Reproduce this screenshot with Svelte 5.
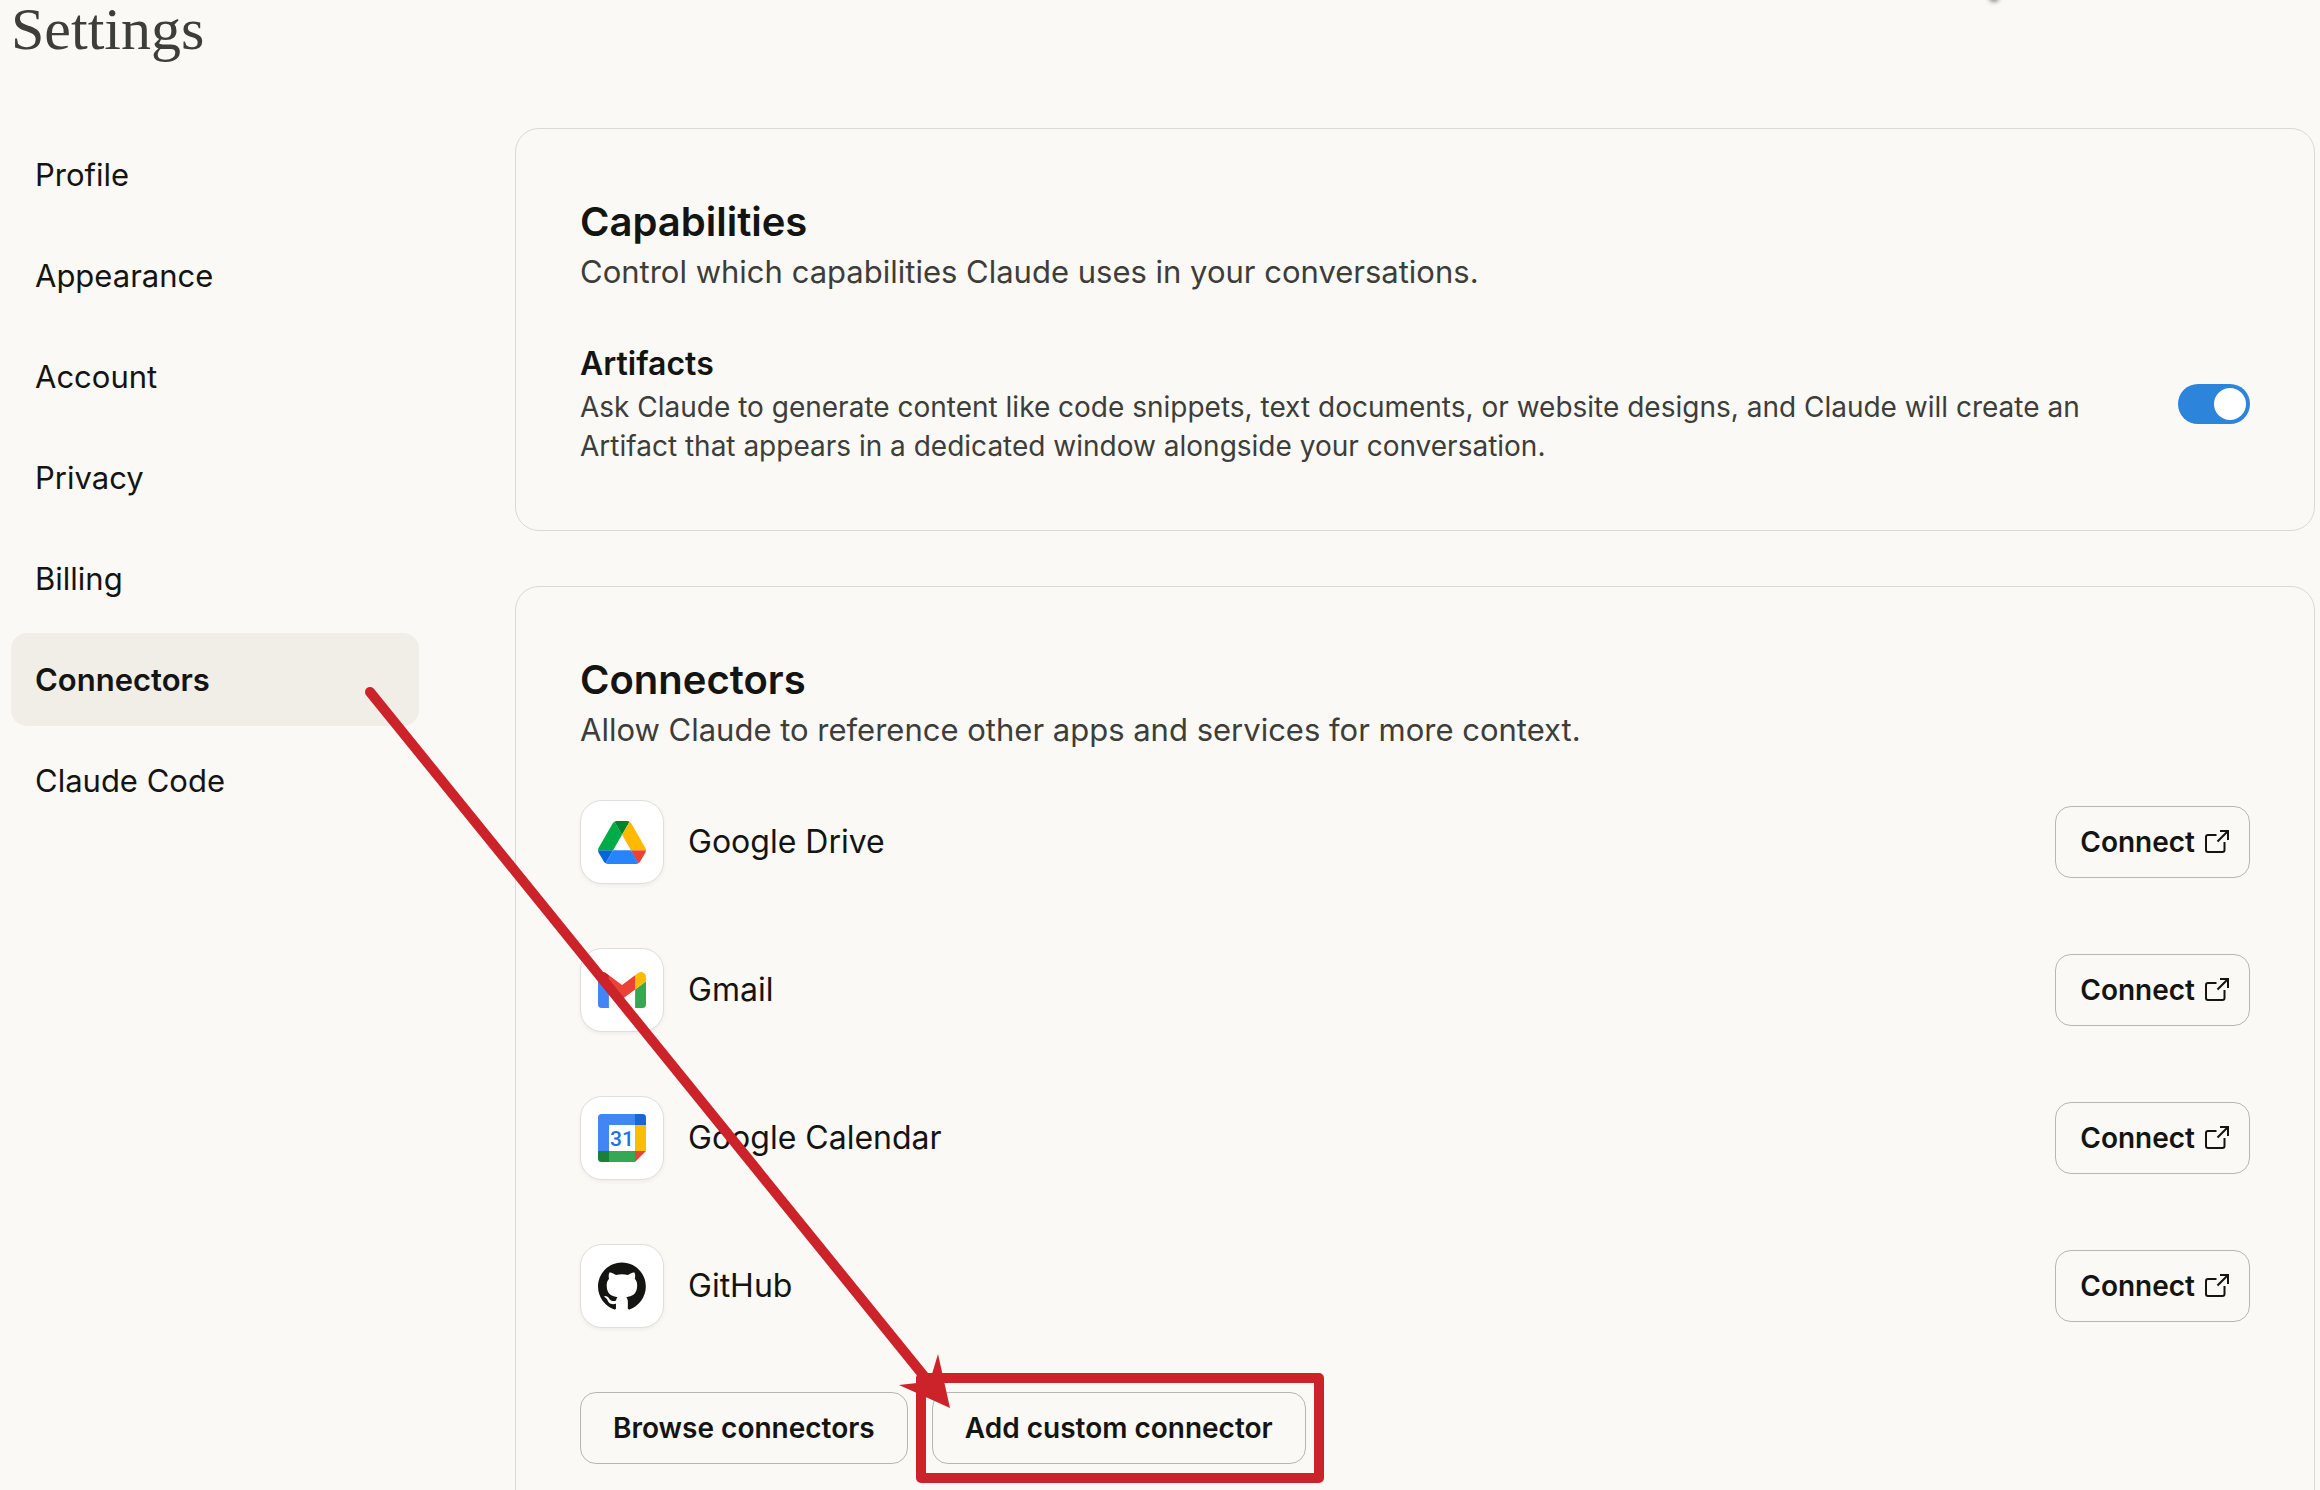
<script lang="ts">
	type ConnectorId = 'drive' | 'gmail' | 'calendar' | 'github';

	interface Connector {
		id: ConnectorId;
		name: string;
	}

	const sections = [
		'Profile',
		'Appearance',
		'Account',
		'Privacy',
		'Billing',
		'Connectors',
		'Claude Code'
	];

	const connectors: Connector[] = [
		{ id: 'drive', name: 'Google Drive' },
		{ id: 'gmail', name: 'Gmail' },
		{ id: 'calendar', name: 'Google Calendar' },
		{ id: 'github', name: 'GitHub' }
	];

	let active = $state('Connectors');
	let artifacts = $state(true);

	function select(e: MouseEvent, section: string) {
		e.preventDefault();
		active = section;
	}
</script>

{#snippet logo(id: ConnectorId)}
	{#if id === 'drive'}
		<svg width="48" height="43" viewBox="0 0 87.3 78" aria-hidden="true">
			<path
				fill="#0066da"
				d="m6.6 66.85 3.85 6.65c.8 1.4 1.95 2.5 3.3 3.3l13.75-23.8h-27.5c0 1.55.4 3.1 1.2 4.5z"
			/>
			<path
				fill="#00ac47"
				d="m43.65 25-13.75-23.8c-1.35.8-2.5 1.9-3.3 3.3l-25.4 44a9.06 9.06 0 0 0-1.2 4.5h27.5z"
			/>
			<path
				fill="#ea4335"
				d="m73.55 76.8c1.35-.8 2.5-1.9 3.3-3.3l1.6-2.75 7.65-13.25c.8-1.4 1.2-2.95 1.2-4.5h-27.5l5.85 11.5z"
			/>
			<path
				fill="#00832d"
				d="m43.65 25 13.75-23.8c-1.35-.8-2.9-1.2-4.5-1.2h-18.5c-1.6 0-3.15.45-4.5 1.2z"
			/>
			<path
				fill="#2684fc"
				d="m59.8 53h-32.3l-13.75 23.8c1.35.8 2.9 1.2 4.5 1.2h50.8c1.6 0 3.15-.45 4.5-1.2z"
			/>
			<path
				fill="#ffba00"
				d="m73.4 26.5-12.7-22c-.8-1.4-1.95-2.5-3.3-3.3l-13.75 23.8 16.15 28h27.45c0-1.55-.4-3.1-1.2-4.5z"
			/>
		</svg>
	{:else if id === 'gmail'}
		<svg width="48" height="36" viewBox="52 42 88 66" aria-hidden="true">
			<path fill="#4285f4" d="M58 108h14V74L52 59v43c0 3.32 2.69 6 6 6" />
			<path fill="#34a853" d="M120 108h14c3.32 0 6-2.69 6-6V59l-20 15" />
			<path fill="#fbbc04" d="M120 48v26l20-15v-8c0-7.42-8.47-11.65-14.4-7.2" />
			<path fill="#ea4335" d="M72 74V48l24 18 24-18v26L96 92" />
			<path fill="#c5221f" d="M52 51v8l20 15V48l-5.6-4.2c-5.94-4.45-14.4-.22-14.4 7.2" />
		</svg>
	{:else if id === 'calendar'}
		<svg width="48" height="48" viewBox="0 0 48 48" aria-hidden="true">
			<path fill="#4285f4" d="M3.500 0H37v11H11v26H0V3.500A3.500 3.500 0 0 1 3.500 0z" />
			<path fill="#1967d2" d="M37 0h7.500A3.500 3.500 0 0 1 48 3.500V11H37z" />
			<path fill="#fbbc04" d="M37 11h11v26H37z" />
			<path fill="#188038" d="M0 37h11v11H3.500A3.500 3.500 0 0 1 0 44.500z" />
			<path fill="#34a853" d="M11 37h26v11H11z" />
			<path fill="#ea4335" d="M37 37h11L37 48z" />
			<text class="day" x="24" y="32" text-anchor="middle">31</text>
		</svg>
	{:else}
		<svg width="48" height="48" viewBox="0 0 98 96" aria-hidden="true">
			<path
				fill="#141413"
				fill-rule="evenodd"
				d="M48.854 0C21.839 0 0 22 0 49.217c0 21.756 13.993 40.172 33.405 46.69 2.427.49 3.316-1.059 3.316-2.362 0-1.141-.08-5.052-.08-9.127-13.59 2.934-16.42-5.867-16.42-5.867-2.184-5.704-5.42-7.17-5.42-7.17-4.448-3.015.324-3.015.324-3.015 4.934.326 7.523 5.052 7.523 5.052 4.367 7.496 11.404 5.378 14.235 4.074.404-3.178 1.699-5.378 3.074-6.6-10.839-1.141-22.243-5.378-22.243-24.283 0-5.378 1.94-9.778 5.014-13.2-.485-1.222-2.184-6.275.486-13.038 0 0 4.125-1.304 13.426 5.052a46.97 46.97 0 0 1 12.214-1.63c4.125 0 8.33.571 12.213 1.63 9.302-6.356 13.427-5.052 13.427-5.052 2.67 6.763.97 11.816.485 13.038 3.155 3.422 5.015 7.822 5.015 13.2 0 18.905-11.404 23.06-22.324 24.283 1.78 1.548 3.316 4.481 3.316 9.126 0 6.6-.08 11.897-.08 13.526 0 1.304.89 2.853 3.316 2.364 19.412-6.52 33.405-24.935 33.405-46.691C97.707 22 75.788 0 48.854 0z"
			/>
		</svg>
	{/if}
{/snippet}

<div class="page">
	<span class="smudge"></span>
	<h1 class="title">Settings</h1>

	<div class="layout">
		<nav class="nav">
			{#each sections as section (section)}
				<a
					class="nav-item"
					class:active={section === active}
					href="#settings"
					onclick={(e) => select(e, section)}>{section}</a
				>
			{/each}
		</nav>

		<main class="cards">
			<section class="card">
				<h2 class="card-title">Capabilities</h2>
				<p class="card-text">Control which capabilities Claude uses in your conversations.</p>

				<div class="setting">
					<div>
						<label class="setting-title" for="artifacts">Artifacts</label>
						<p class="setting-text">
							Ask Claude to generate content like code snippets, text documents, or website designs,
							and Claude will create an Artifact that appears in a dedicated window alongside your
							conversation.
						</p>
					</div>
					<input id="artifacts" class="toggle" type="checkbox" bind:checked={artifacts} />
				</div>
			</section>

			<section class="card">
				<h2 class="card-title">Connectors</h2>
				<p class="card-text">Allow Claude to reference other apps and services for more context.</p>

				<ul class="connectors">
					{#each connectors as connector (connector.id)}
						<li class="connector">
							<span class="tile">{@render logo(connector.id)}</span>
							<span class="connector-name">{connector.name}</span>
							<button class="btn connect">
								Connect
								<svg width="26" height="26" viewBox="0 0 26 26" aria-hidden="true">
									<path d="M12.500 6H4a2 2 0 0 0-2 2v13a2 2 0 0 0 2 2h14.500a2 2 0 0 0 2-2v-8" />
									<path d="M16 2h8v9M24 2 13.500 12.500" />
								</svg>
							</button>
						</li>
					{/each}
				</ul>

				<div class="actions">
					<button class="btn">Browse connectors</button>
					<button class="btn">Add custom connector</button>
				</div>
			</section>
		</main>
	</div>

	<!-- arrow from the nav item to the highlighted button -->
	<svg class="annotation" width="1400" height="1490" viewBox="0 0 1400 1490" aria-hidden="true">
		<path class="stroke" d="M370 692 932 1386" />
		<rect class="stroke" x="921" y="1378" width="398" height="100" />
		<path class="head" d="M950 1408 938 1354 932 1374 917 1383 899 1385z" />
	</svg>
</div>

<style>
	:global(body) {
		background: #faf9f5;
	}

	.page {
		position: relative;
		box-sizing: border-box;
		height: 100vh;
		padding: 0 5px 0 11px;
		overflow: hidden;
		background: #faf9f5;
		color: #141413;
		font-family: Inter, 'Liberation Sans', sans-serif;
		font-size: 32px;
		line-height: 44px;
	}

	.smudge {
		position: absolute;
		top: -6px;
		right: 321px;
		width: 10px;
		height: 8px;
		border-radius: 50%;
		background: #8a8a86;
		filter: blur(2px);
	}

	.title {
		margin: 0 0 70px;
		font-family: 'Liberation Serif', serif;
		font-size: 60px;
		font-weight: 400;
		line-height: 58px;
		color: #3d3d3a;
	}

	.layout {
		display: grid;
		grid-template-columns: 408px minmax(0, 1fr);
		gap: 96px;
		align-items: start;
	}

	.nav {
		display: flex;
		flex-direction: column;
		gap: 8px;
	}

	.nav-item {
		padding: 24px;
		border-radius: 16px;
		color: inherit;
		font-size: 31px;
		line-height: 45px;
		text-decoration: none;
	}

	.nav-item.active {
		background: #f0eee6;
		font-weight: 600;
	}

	.cards {
		display: flex;
		flex-direction: column;
		gap: 55px;
	}

	.card {
		padding: 64px;
		border: 1px solid #dad9d4;
		border-radius: 24px;
	}

	.card-title {
		margin: 0;
		font-size: 40px;
		font-weight: 600;
		line-height: 57px;
	}

	.card-text {
		margin: 0;
		font-size: 31px;
		color: #3d3d3a;
	}

	.setting {
		display: flex;
		align-items: center;
		justify-content: space-between;
		gap: 64px;
		margin-top: 48px;
	}

	.setting-title {
		font-weight: 600;
	}

	.setting-text {
		margin: 2px 0 0;
		font-size: 28px;
		line-height: 39px;
		color: #3d3d3a;
	}

	.toggle {
		appearance: none;
		flex: none;
		display: flex;
		width: 72px;
		height: 40px;
		margin: 0;
		padding: 4px;
		border-radius: 20px;
		background: #b8b7b2;
		cursor: pointer;
	}

	.toggle::before {
		content: '';
		width: 32px;
		height: 32px;
		border-radius: 50%;
		background: #fff;
	}

	.toggle:checked {
		justify-content: flex-end;
		background: #2c84db;
	}

	.connectors {
		display: flex;
		flex-direction: column;
		gap: 64px;
		margin: 48px 0 64px;
		padding: 0;
		list-style: none;
	}

	.connector {
		display: flex;
		align-items: center;
		gap: 24px;
	}

	.tile {
		display: flex;
		align-items: center;
		justify-content: center;
		box-sizing: border-box;
		width: 84px;
		height: 84px;
		border: 1px solid #dfdedb;
		border-radius: 22px;
		background: #fff;
		box-shadow: 0 2px 4px rgba(0, 0, 0, 0.05);
	}

	.day {
		fill: #1a73e8;
		font-family: Roboto, sans-serif;
		font-size: 21px;
		font-weight: 500;
	}

	.connector-name {
		flex: 1;
	}

	.btn {
		display: flex;
		align-items: center;
		gap: 9px;
		height: 72px;
		padding: 0 32px;
		border: 1px solid #b7b6b1;
		border-radius: 16px;
		background: transparent;
		color: inherit;
		font: inherit;
		font-size: 28px;
		font-weight: 600;
		cursor: pointer;
	}

	.btn:hover {
		background: #f0eee6;
	}

	.connect {
		padding: 0 19px 0 24px;
	}

	.connect svg {
		fill: none;
		stroke: currentColor;
		stroke-width: 2;
	}

	.actions {
		display: flex;
		gap: 24px;
	}

	.annotation {
		position: absolute;
		top: 0;
		left: 0;
		pointer-events: none;
	}

	.stroke {
		fill: none;
		stroke: #cc232a;
		stroke-width: 10;
		stroke-linecap: round;
		stroke-linejoin: round;
	}

	.head {
		fill: #cc232a;
	}
</style>
